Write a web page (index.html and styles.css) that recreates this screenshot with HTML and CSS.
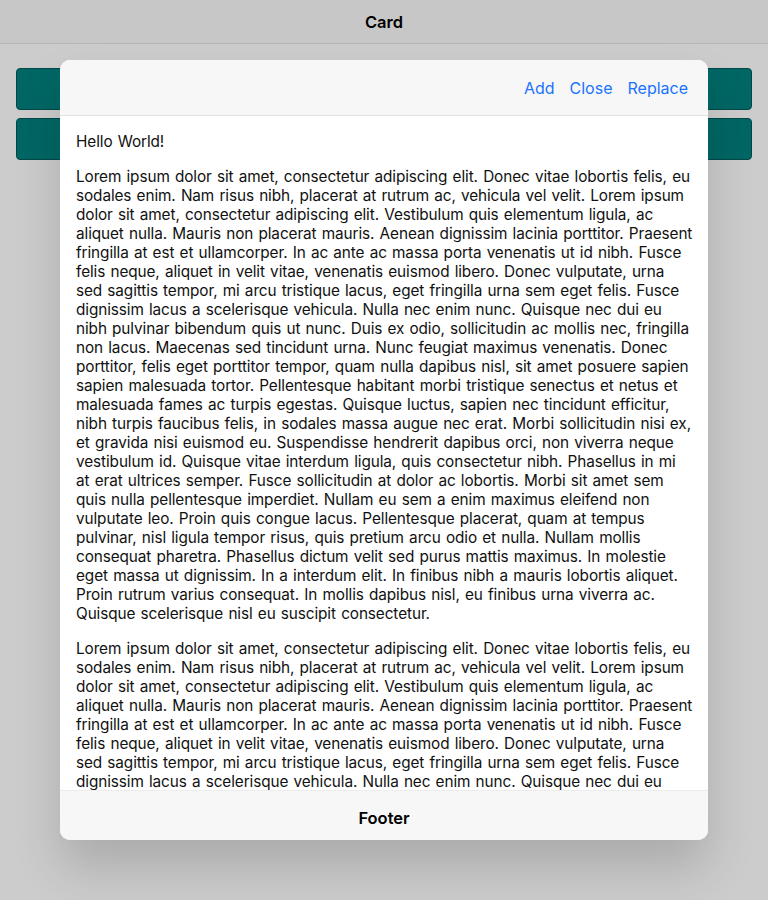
FILE: index.html
```html
<!DOCTYPE html>
<html lang="en">
<head>
<meta charset="utf-8">
<title>Card</title>
<link rel="stylesheet" href="styles.css">
</head>
<body>
<div class="app">
  <header class="toolbar"><h1 class="title">Card</h1></header>
  <main class="page">
    <button class="teal-btn"></button>
    <button class="teal-btn"></button>
  </main>
</div>
<div class="modal">
  <div class="modal-header">
    <button class="link">Add</button>
    <button class="link">Close</button>
    <button class="link">Replace</button>
  </div>
  <div class="modal-content">
    <p>Hello World!</p>
    <p>Lorem ipsum dolor sit amet, consectetur adipiscing elit. Donec vitae lobortis felis, eu sodales enim. Nam risus nibh, placerat at rutrum ac, vehicula vel velit. Lorem ipsum dolor sit amet, consectetur adipiscing elit. Vestibulum quis elementum ligula, ac aliquet nulla. Mauris non placerat mauris. Aenean dignissim lacinia porttitor. Praesent fringilla at est et ullamcorper. In ac ante ac massa porta venenatis ut id nibh. Fusce felis neque, aliquet in velit vitae, venenatis euismod libero. Donec vulputate, urna sed sagittis tempor, mi arcu tristique lacus, eget fringilla urna sem eget felis. Fusce dignissim lacus a scelerisque vehicula. Nulla nec enim nunc. Quisque nec dui eu nibh pulvinar bibendum quis ut nunc. Duis ex odio, sollicitudin ac mollis nec, fringilla non lacus. Maecenas sed tincidunt urna. Nunc feugiat maximus venenatis. Donec porttitor, felis eget porttitor tempor, quam nulla dapibus nisl, sit amet posuere sapien sapien malesuada tortor. Pellentesque habitant morbi tristique senectus et netus et malesuada fames ac turpis egestas. Quisque luctus, sapien nec tincidunt efficitur, nibh turpis faucibus felis, in sodales massa augue nec erat. Morbi sollicitudin nisi ex, et gravida nisi euismod eu. Suspendisse hendrerit dapibus orci, non viverra neque vestibulum id. Quisque vitae interdum ligula, quis consectetur nibh. Phasellus in mi at erat ultrices semper. Fusce sollicitudin at dolor ac lobortis. Morbi sit amet sem quis nulla pellentesque imperdiet. Nullam eu sem a enim maximus eleifend non vulputate leo. Proin quis congue lacus. Pellentesque placerat, quam at tempus pulvinar, nisl ligula tempor risus, quis pretium arcu odio et nulla. Nullam mollis consequat pharetra. Phasellus dictum velit sed purus mattis maximus. In molestie eget massa ut dignissim. In a interdum elit. In finibus nibh a mauris lobortis aliquet. Proin rutrum varius consequat. In mollis dapibus nisl, eu finibus urna viverra ac. Quisque scelerisque nisl eu suscipit consectetur.</p>
    <p>Lorem ipsum dolor sit amet, consectetur adipiscing elit. Donec vitae lobortis felis, eu sodales enim. Nam risus nibh, placerat at rutrum ac, vehicula vel velit. Lorem ipsum dolor sit amet, consectetur adipiscing elit. Vestibulum quis elementum ligula, ac aliquet nulla. Mauris non placerat mauris. Aenean dignissim lacinia porttitor. Praesent fringilla at est et ullamcorper. In ac ante ac massa porta venenatis ut id nibh. Fusce felis neque, aliquet in velit vitae, venenatis euismod libero. Donec vulputate, urna sed sagittis tempor, mi arcu tristique lacus, eget fringilla urna sem eget felis. Fusce dignissim lacus a scelerisque vehicula. Nulla nec enim nunc. Quisque nec dui eu nibh pulvinar bibendum quis ut nunc.</p>
  </div>
  <div class="modal-footer"><h2 class="footer-title">Footer</h2></div>
</div>
</body>
</html>
```
FILE: styles.css
```css
html, body {
  margin: 0;
  padding: 0;
  height: 100%;
}
body {
  background: #cccccc;
  font-family: Inter, Roboto, "Liberation Sans", sans-serif;
  color: #000;
  overflow: hidden;
}
.app {
  display: flex;
  flex-direction: column;
  height: 100%;
}
.toolbar {
  height: 43px;
  background: #c7c7c7;
  border-bottom: 1px solid #b5b5b5;
  display: flex;
  align-items: center;
  justify-content: center;
}
.title {
  margin: 0;
  font-size: 16.5px;
  font-weight: 600;
  color: #000;
}
.page {
  display: flex;
  flex-direction: column;
  gap: 8px;
  padding: 24px 16px;
}
.teal-btn {
  height: 42px;
  margin: 0;
  border: 1px solid #034848;
  border-radius: 4px;
  background: #016764;
}
.modal {
  position: absolute;
  left: 60px;
  top: 60px;
  width: 648px;
  height: 780px;
  border-radius: 10px;
  overflow: hidden;
  background: #fff;
  display: flex;
  flex-direction: column;
  box-shadow: 0 28px 48px rgba(0, 0, 0, 0.16);
}
.modal-header {
  height: 55px;
  flex: none;
  background: #f7f7f7;
  border-bottom: 1px solid #e2e2e2;
  display: flex;
  align-items: center;
  justify-content: flex-end;
  gap: 15px;
  padding: 0 20px;
}
.link {
  border: 0;
  background: none;
  padding: 0;
  font-family: inherit;
  font-size: 16px;
  color: #1a73ff;
  cursor: pointer;
}
.modal-content {
  flex: 1;
  overflow: hidden;
  padding: 16px 14.7px 0 16px;
}
.modal-content p {
  margin: 0 0 16px;
  font-size: 15.35px;
  letter-spacing: -0.1px;
  word-spacing: 1px;
  line-height: 19px;
  color: #111;
}
.modal-footer {
  flex: none;
  box-sizing: border-box;
  height: 50px;
  padding-top: 4px;
  background: #f7f7f7;
  border-top: 1px solid #ececec;
  display: flex;
  align-items: center;
  justify-content: center;
}
.footer-title {
  margin: 0;
  font-size: 16.5px;
  font-weight: 600;
}
```
